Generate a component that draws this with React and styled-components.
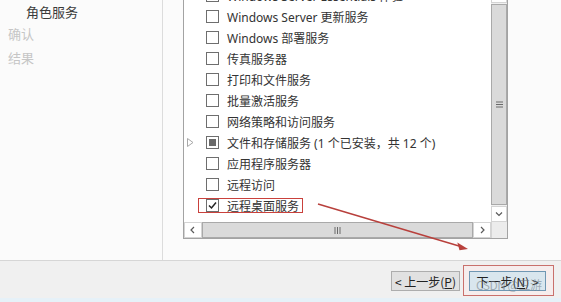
import React from "react";
import styled, { createGlobalStyle } from "styled-components";

const GlobalStyle = createGlobalStyle`
  html, body {
    margin: 0;
    padding: 0;
    background: #fbfbfb;
  }
  body {
    font-family: "Noto Sans", "Noto Sans CJK SC", sans-serif;
  }
`;

const Page = styled.div`
  position: relative;
  width: 561px;
  height: 302px;
  overflow: hidden;
  display: flex;
  flex-direction: column;
  background: #fbfbfb;
`;

const Main = styled.div`
  height: 260px;
  display: flex;
  overflow: hidden;
`;

const Nav = styled.div`
  width: 162px;
  border-right: 1px solid #dcdcdc;
  display: flex;
  flex-direction: column;
  font-family: "Noto Sans CJK SC", sans-serif;
  font-size: 13px;
`;

const NavItem = styled.div`
  height: 23px;
  line-height: 23px;
  padding-left: ${(p) => (p.$sub ? 26 : 8)}px;
  color: ${(p) => (p.$active ? "#3a3a3a" : "#c6c6c6")};
  margin-top: ${(p) => p.$mt || 0}px;
`;

const Content = styled.div`
  flex: 1;
  padding-left: 20px;
`;

const ListBox = styled.div`
  margin-top: -14px;
  width: 323px;
  height: 251px;
  border: 1px solid #a3a3a3;
  background: #fff;
  display: grid;
  grid-template-columns: 1fr 16px;
  grid-template-rows: 1fr 16px;
`;

const Rows = styled.div`
  overflow: hidden;
  padding-top: 0;
`;

const RowsInner = styled.div`
  margin-top: -2px;
`;

const Row = styled.div`
  height: 21px;
  display: flex;
  align-items: center;
  font-size: 12px;
  color: #333;
  white-space: nowrap;
`;

const Expander = styled.div`
  width: 22px;
  height: 21px;
  display: flex;
  align-items: center;
  padding-left: 3px;
  box-sizing: border-box;
`;

const Label = styled.div`
  position: relative;
  display: flex;
  align-items: center;
  height: 15px;

  ${(p) =>
    p.$marked &&
    `
    &::after {
      content: "";
      position: absolute;
      left: -8px;
      right: -4px;
      top: 0;
      bottom: 0;
      border: 1px solid #c9413c;
    }
  `}
`;

const Box = styled.span`
  width: 11px;
  height: 11px;
  border: 1px solid #6e6e6e;
  background: #fff;
  margin-right: 8px;
  display: flex;
  align-items: center;
  justify-content: center;
  flex-shrink: 0;
`;

const Fill = styled.span`
  width: 7px;
  height: 7px;
  background: #6a6a6a;
`;

const VBar = styled.div`
  display: flex;
  flex-direction: column;
  background: #f0f0f0;
`;

const HBar = styled.div`
  display: flex;
  background: #f0f0f0;
`;

const ArrowBtn = styled.div`
  width: ${(p) => (p.$h ? 18 : 16)}px;
  height: 16px;
  flex-shrink: 0;
  background: #fff;
  border: 1px solid #d4d4d4;
  box-sizing: border-box;
  display: flex;
  align-items: center;
  justify-content: center;
`;

const Thumb = styled.div`
  flex: 1;
  background: #dadada;
  border: 1px solid #a9a9a9;
  box-sizing: border-box;
  display: flex;
  align-items: center;
  justify-content: center;
  margin: ${(p) => (p.$h ? "0" : "1px 0")};
`;

const Corner = styled.div`
  background: #ececec;
  border-left: 1px solid #d4d4d4;
`;

const Footer = styled.div`
  flex: 1;
  border-top: 1px solid #d6d6d6;
  border-bottom: 4px solid #e6f1f8;
  background: #f0f0f0;
  display: flex;
  justify-content: flex-end;
  align-items: flex-start;
  padding: 4px 7px 0 0;
`;

const Button = styled.div`
  height: 20px;
  box-sizing: border-box;
  border: 1px solid ${(p) => (p.$primary ? "#6f97b3" : "#adadad")};
  background: ${(p) => (p.$primary ? "#d9e6ee" : "#e1e1e1")};
  font-family: "Noto Sans CJK SC", sans-serif;
  font-size: 12px;
  color: #222;
  display: flex;
  align-items: center;
  justify-content: center;
  width: ${(p) => p.$w}px;
  margin-top: ${(p) => p.$mt || 0}px;

  u {
    text-decoration: underline;
  }
`;

const NextWrap = styled.div`
  position: relative;
  margin-left: 3px;
  border: 1px solid #c9706c;
  background: #f6eded;
  padding: 5px 7px 4px 5px;
`;

const Watermark = styled.span`
  position: absolute;
  left: 12px;
  top: 10px;
  font-family: "Noto Sans CJK SC", sans-serif;
  font-size: 12px;
  color: rgba(110, 120, 130, 0.55);
  letter-spacing: -0.5px;
  pointer-events: none;
`;

const ArrowOverlay = styled.svg`
  position: absolute;
  left: 0;
  top: 0;
  pointer-events: none;
`;

const Chevron = ({ dir }) => {
  const d = {
    down: "M2 3.5 L5 6.5 L8 3.5",
    left: "M6 2 L3 5 L6 8",
    right: "M4 2 L7 5 L4 8",
  }[dir];
  return (
    <svg width="10" height="10" viewBox="0 0 10 10">
      <path d={d} fill="none" stroke="#5a5a5a" strokeWidth="1.2" />
    </svg>
  );
};

const Grip = ({ h }) =>
  h ? (
    <svg width="7" height="7" viewBox="0 0 7 7">
      <path d="M1 0V7M3.5 0V7M6 0V7" stroke="#6a6a6a" strokeWidth="1" />
    </svg>
  ) : (
    <svg width="7" height="7" viewBox="0 0 7 7">
      <path d="M0 1H7M0 3.5H7M0 6H7" stroke="#6a6a6a" strokeWidth="1" />
    </svg>
  );

const Check = () => (
  <svg width="11" height="11" viewBox="0 0 11 11">
    <path d="M2 5.5 L4.5 8 L9 2.5" fill="none" stroke="#222" strokeWidth="1.5" />
  </svg>
);

const Triangle = () => (
  <svg width="7" height="9" viewBox="0 0 7 9">
    <path d="M0.5 0.5 L6 4.5 L0.5 8.5 Z" fill="none" stroke="#a8a8a8" strokeWidth="1" />
  </svg>
);

const services = [
  { name: "Windows Server Essentials 体验" },
  { name: "Windows Server 更新服务" },
  { name: "Windows 部署服务" },
  { name: "传真服务器" },
  { name: "打印和文件服务" },
  { name: "批量激活服务" },
  { name: "网络策略和访问服务" },
  { name: "文件和存储服务 (1 个已安装，共 12 个)", state: "partial", expand: true },
  { name: "应用程序服务器" },
  { name: "远程访问" },
  { name: "远程桌面服务", state: "checked", marked: true },
  { name: "" },
];

const App = () => {
  return (
    <>
      <GlobalStyle />
      <Page>
        <Main>
          <Nav>
            <NavItem $sub $active>角色服务</NavItem>
            <NavItem $mt={-1}>确认</NavItem>
            <NavItem $mt={1}>结果</NavItem>
          </Nav>
          <Content>
            <ListBox>
              <Rows>
                <RowsInner>
                  {services.map((s, i) => (
                    <Row key={i}>
                      <Expander>{s.expand && <Triangle />}</Expander>
                      {s.name && (
                        <Label $marked={s.marked}>
                          <Box>
                            {s.state === "partial" && <Fill />}
                            {s.state === "checked" && <Check />}
                          </Box>
                          {s.name}
                        </Label>
                      )}
                    </Row>
                  ))}
                </RowsInner>
              </Rows>
              <VBar>
                <ArrowBtn>
                  <Chevron dir="down" />
                </ArrowBtn>
                <Thumb>
                  <Grip />
                </Thumb>
                <ArrowBtn>
                  <Chevron dir="down" />
                </ArrowBtn>
              </VBar>
              <HBar>
                <ArrowBtn $h>
                  <Chevron dir="left" />
                </ArrowBtn>
                <Thumb $h>
                  <Grip h />
                </Thumb>
                <ArrowBtn $h>
                  <Chevron dir="right" />
                </ArrowBtn>
              </HBar>
              <Corner />
            </ListBox>
          </Content>
        </Main>
        <Footer>
          <Button $w={69} $mt={6}>
            &lt; 上一步(<u>P</u>)
          </Button>
          <NextWrap>
            <Button $primary $w={77}>
              下一步(<u>N</u>) &gt;
            </Button>
            <Watermark>CSDN @三游</Watermark>
          </NextWrap>
        </Footer>
        <ArrowOverlay width="561" height="302">
          <line x1="318" y1="204" x2="459" y2="246" stroke="#b8403c" strokeWidth="1.5" />
          <polygon points="468,249 457.3,242.4 459.5,250.3" fill="#b8403c" />
        </ArrowOverlay>
      </Page>
    </>
  );
};

export default App;
